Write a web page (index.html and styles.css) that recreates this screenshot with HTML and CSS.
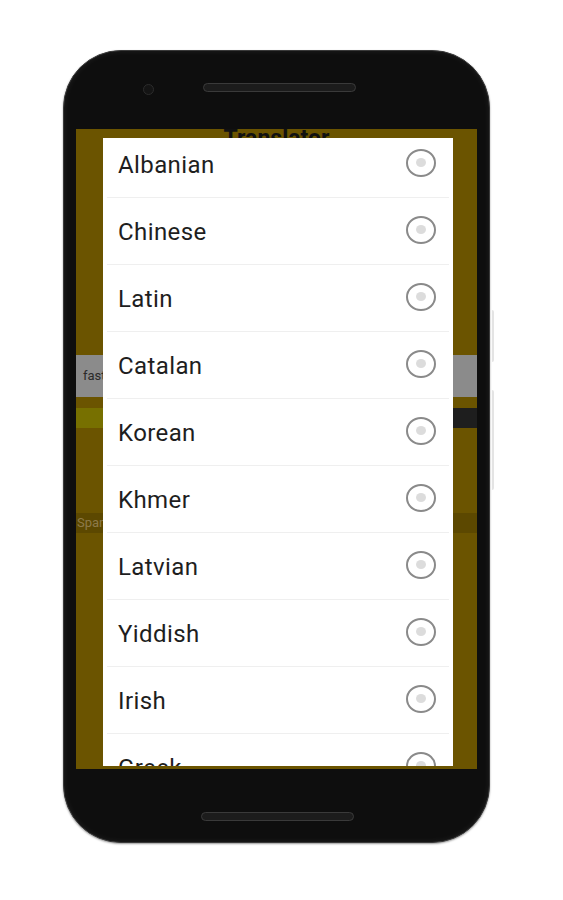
FILE: index.html
```html
<!DOCTYPE html>
<html lang="en">
<head>
  <meta charset="UTF-8">
  <meta name="viewport" content="width=device-width, initial-scale=1.0">
  <title>Translator - Language</title>
  <link rel="stylesheet" href="styles.css">
</head>
<body>

  <div class="phone">
    <!-- side keys -->
    <span class="side-key key-power"></span>
    <span class="side-key key-volume"></span>

    <div class="phone-top">
      <span class="camera"></span>
      <span class="speaker"></span>
    </div>

    <div class="screen">
      <!-- app behind the dialog -->
      <div class="app">
        <h1 class="app-title">Translator</h1>
        <div class="input-bar">fast translate</div>
        <div class="button-row">
          <span class="btn-left"></span>
          <span class="btn-right"></span>
        </div>
        <div class="lang-band">Spanish</div>
      </div>

      <!-- language picker -->
      <div class="dialog">
        <ul class="lang-list">
          <li class="lang-item"><span>Albanian</span><i class="radio"></i></li>
          <li class="lang-item"><span>Chinese</span><i class="radio"></i></li>
          <li class="lang-item"><span>Latin</span><i class="radio"></i></li>
          <li class="lang-item"><span>Catalan</span><i class="radio"></i></li>
          <li class="lang-item"><span>Korean</span><i class="radio"></i></li>
          <li class="lang-item"><span>Khmer</span><i class="radio"></i></li>
          <li class="lang-item"><span>Latvian</span><i class="radio"></i></li>
          <li class="lang-item"><span>Yiddish</span><i class="radio"></i></li>
          <li class="lang-item"><span>Irish</span><i class="radio"></i></li>
          <li class="lang-item"><span>Greek</span><i class="radio"></i></li>
        </ul>
      </div>
    </div>

    <div class="phone-bottom">
      <span class="speaker"></span>
    </div>
  </div>

</body>
</html>
```

FILE: styles.css
```css
body {
  margin: 0;
  padding: 50px 0 0 63px;
  background-color: #ffffff;
  font-family: Roboto, "Liberation Sans", sans-serif;
  width: 563px;
  height: 900px;
  box-sizing: border-box;
  overflow: hidden;
}

/* phone body */
.phone {
  position: relative;
  width: 427px;
  height: 793px;
  box-sizing: border-box;
  background-color: #0e0e0e;
  border: 1px solid #3a3a3a;
  border-radius: 58px;
  box-shadow: inset 0 0 6px rgba(255, 255, 255, 0.08), 0 1px 2px rgba(0, 0, 0, 0.4);
  display: flex;
  flex-direction: column;
}

.side-key {
  position: absolute;
  left: 428px;
  width: 2px;
  background-color: #e4e4e4;
  border-radius: 0 2px 2px 0;
}

.key-power {
  top: 259px;
  height: 52px;
}

.key-volume {
  top: 339px;
  height: 100px;
}

.phone-top {
  height: 78px;
  display: flex;
  align-items: flex-start;
  padding: 32px 0 0 79px;
  box-sizing: border-box;
  gap: 49px;
}

.camera {
  width: 9px;
  height: 9px;
  border-radius: 50%;
  background-color: #141414;
  border: 1px solid #2c2c2c;
  margin-top: 1px;
}

.speaker {
  width: 153px;
  height: 9px;
  border-radius: 5px;
  background-color: #1c1c1c;
  border: 1px solid #3a3a3a;
  box-sizing: border-box;
}

/* screen */
.screen {
  position: relative;
  height: 640px;
  margin: 0 12px;
  background-color: #6b5400;
  overflow: hidden;
}

.app-title {
  margin: -3px 0 0;
  text-align: center;
  font-size: 23px;
  line-height: 26px;
  font-weight: bold;
  color: #111111;
}

.input-bar {
  margin-top: 203px;
  height: 42px;
  background-color: #8b8b8b;
  color: #2a2a2a;
  font-size: 13px;
  line-height: 42px;
  padding-left: 7px;
}

.button-row {
  display: flex;
  margin-top: 11px;
  height: 20px;
}

.btn-left {
  flex: 1;
  background-color: #777000;
}

.btn-right {
  flex: 1;
  background-color: #1e1e1e;
}

.lang-band {
  margin-top: 85px;
  height: 20px;
  background-color: #5c4800;
  color: #8d7a4a;
  font-size: 13px;
  line-height: 20px;
  padding-left: 1px;
}

/* dialog */
.dialog {
  position: absolute;
  top: 9px;
  bottom: 3px;
  left: 27px;
  width: 350px;
  background-color: #ffffff;
  overflow: hidden;
}

.lang-list {
  list-style: none;
  margin: -7px 0 0;
  padding: 0;
}

.lang-item {
  height: 67px;
  display: flex;
  align-items: center;
  justify-content: space-between;
  padding: 0 17px 0 15px;
  box-sizing: border-box;
  font-size: 24px;
  color: #1e1e1e;
  letter-spacing: 0.4px;
  position: relative;
}

.lang-item::after {
  content: "";
  position: absolute;
  left: 4px;
  right: 4px;
  bottom: 0;
  height: 1px;
  background-color: #efefef;
}

.radio {
  width: 30px;
  height: 28px;
  box-sizing: border-box;
  border: 2px solid #8a8a8a;
  border-radius: 50%;
  display: flex;
  align-items: center;
  justify-content: center;
  margin-top: -3px;
}

.radio::before {
  content: "";
  width: 10px;
  height: 9px;
  border-radius: 50%;
  background-color: #dcdcdc;
  margin-top: -2px;
}

.phone-bottom {
  flex: 1;
  display: flex;
  justify-content: center;
  padding: 43px 0 0 2px;
  box-sizing: border-box;
}
```
